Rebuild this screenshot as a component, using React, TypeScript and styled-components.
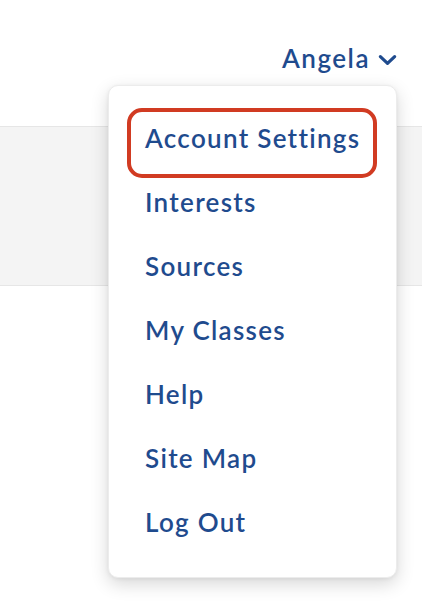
import React from 'react';
import styled, {createGlobalStyle} from 'styled-components';

const GlobalStyle = createGlobalStyle`
  html, body {
    margin: 0;
    padding: 0;
    background: #ffffff;
  }
  body {
    font-family: Lato, "Noto Sans", sans-serif;
  }
`;

const items = [
  'Account Settings',
  'Interests',
  'Sources',
  'My Classes',
  'Help',
  'Site Map',
  'Log Out',
];

const App: React.FC = () => {
  return (
    <Page>
      <GlobalStyle />
      <Header>
        <UserButton>
          Angela
          <Chevron viewBox="0 0 20 12">
            <path d="M2.5 2.5 L10 9.5 L17.5 2.5" />
          </Chevron>
        </UserButton>
      </Header>
      <Band />
      <Menu>
        {items.map((label, i) => (
          <MenuItem key={label} $active={i === 0}>
            {label}
          </MenuItem>
        ))}
      </Menu>
    </Page>
  );
};

const Page = styled.div`
  position: relative;
  width: 422px;
  height: 604px;
  overflow: hidden;
  background: #ffffff;
`;

const Header = styled.header`
  height: 126px;
  box-sizing: border-box;
  padding: 42px 25px 0 0;
  display: flex;
  justify-content: flex-end;
  align-items: flex-start;
`;

const UserButton = styled.button`
  display: flex;
  align-items: center;
  gap: 8px;
  border: 0;
  background: none;
  padding: 0;
  font-family: Lato, "Noto Sans", sans-serif;
  font-size: 26px;
  line-height: 32px;
  font-weight: 600;
  letter-spacing: 1.5px;
  color: #1f4b8e;
  cursor: pointer;
`;

const Chevron = styled.svg`
  width: 19px;
  height: 12px;
  margin-top: 4px;
  fill: none;
  stroke: #1f4b8e;
  stroke-width: 3.4;
  stroke-linecap: round;
  stroke-linejoin: round;
`;

const Band = styled.div`
  height: 158px;
  background: #f4f4f4;
  border-top: 1px solid #e6e6e6;
  border-bottom: 1px solid #e6e6e6;
`;

const Menu = styled.nav`
  position: absolute;
  top: 85px;
  left: 108px;
  width: 289px;
  box-sizing: border-box;
  padding: 20px 0 23px;
  background: #ffffff;
  border: 1px solid #ececec;
  border-radius: 10px;
  box-shadow: 0 6px 18px rgba(0, 0, 0, 0.16), 0 1px 4px rgba(0, 0, 0, 0.06);
  display: flex;
  flex-direction: column;
`;

const MenuItem = styled.a<{$active?: boolean}>`
  position: relative;
  display: block;
  height: 64px;
  line-height: 64px;
  padding-left: 36px;
  font-size: 26px;
  font-weight: 600;
  letter-spacing: 1.3px;
  color: #1f4b8e;
  white-space: nowrap;
  cursor: pointer;

  &::before {
    content: '';
    display: ${({$active}) => ($active ? 'block' : 'none')};
    position: absolute;
    top: 2px;
    bottom: -8px;
    left: 18px;
    right: 19px;
    border: 4px solid #d13b22;
    border-radius: 15px;
  }
`;

export default App;
